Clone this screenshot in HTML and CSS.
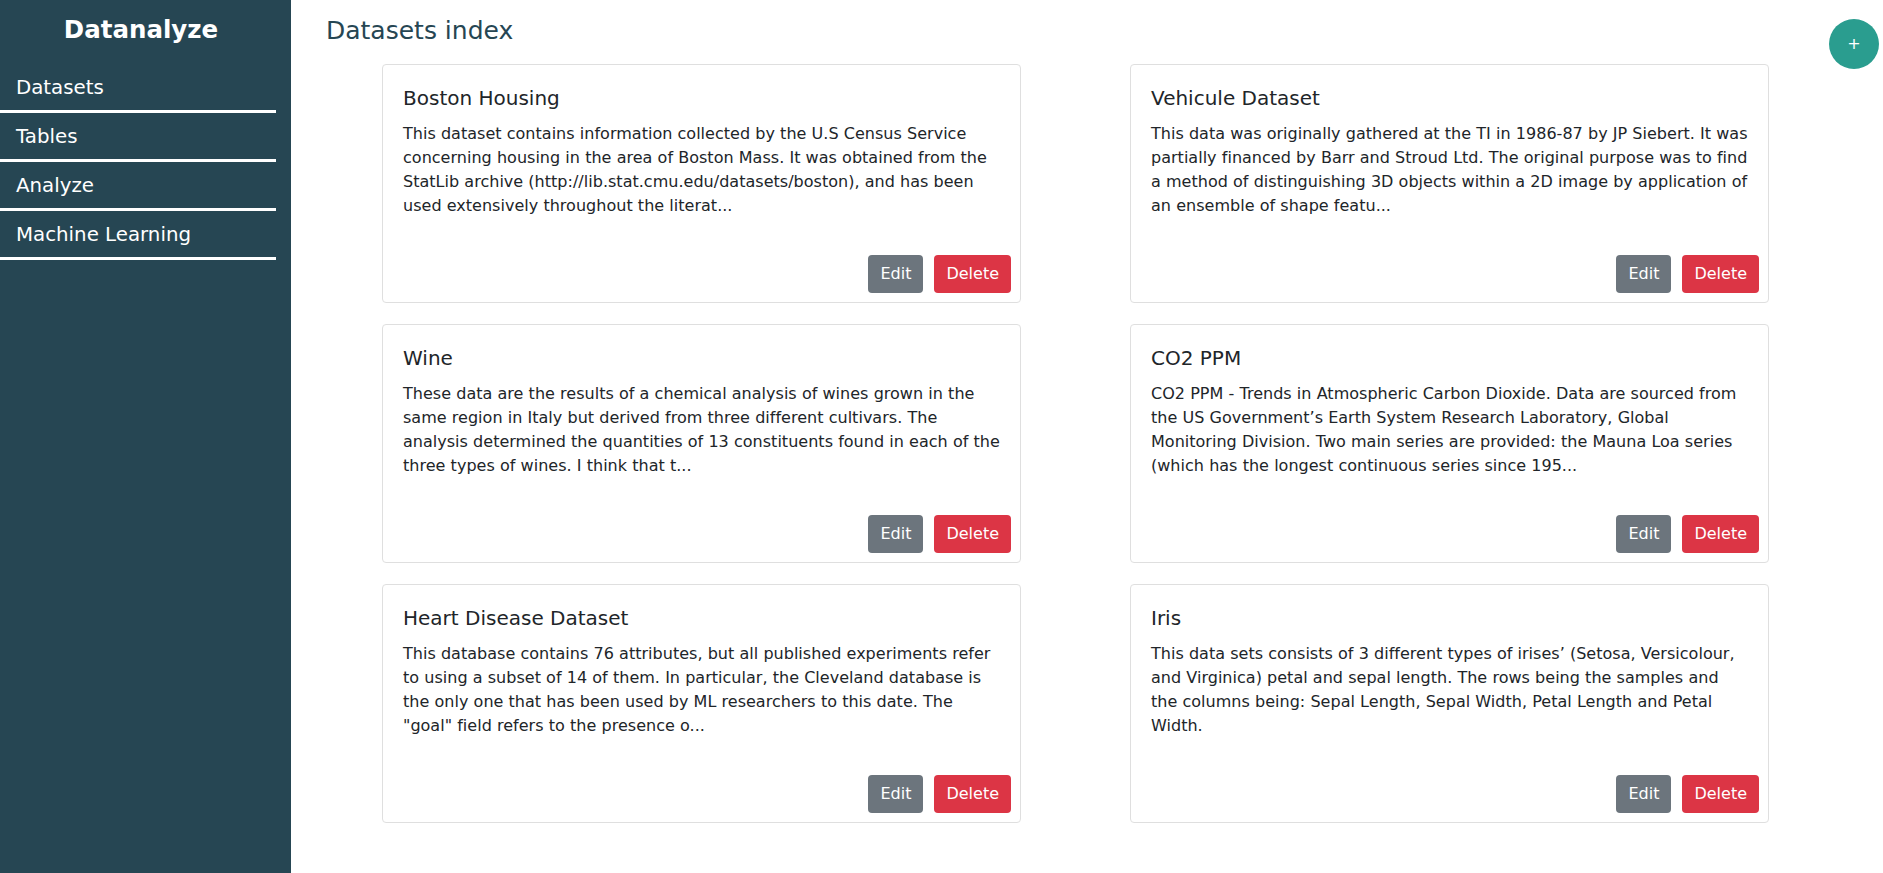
FILE: index.html
```html
<!DOCTYPE html>
<html lang="en">
<head>
<meta charset="utf-8">
<title>Datanalyze</title>
<link rel="stylesheet" href="styles.css">
</head>
<body>
<aside class="sidebar">
  <div class="brand">Datanalyze</div>
  <nav class="nav">
    <a class="nav-item" href="#">Datasets</a>
    <a class="nav-item" href="#">Tables</a>
    <a class="nav-item" href="#">Analyze</a>
    <a class="nav-item" href="#">Machine Learning</a>
  </nav>
</aside>
<main class="main">
  <h1 class="page-title">Datasets index</h1>
  <div class="grid">
    <div class="card">
      <div class="card-body">
        <h5 class="card-title">Boston Housing</h5>
        <p class="card-text">This dataset contains information collected by the U.S Census Service concerning housing in the area of Boston Mass. It was obtained from the StatLib archive (http://lib.stat.cmu.edu/datasets/boston), and has been used extensively throughout the literat...</p>
      </div>
      <div class="card-actions"><button class="btn btn-edit">Edit</button><button class="btn btn-delete">Delete</button></div>
    </div>
    <div class="card">
      <div class="card-body">
        <h5 class="card-title">Vehicule Dataset</h5>
        <p class="card-text">This data was originally gathered at the TI in 1986-87 by JP Siebert. It was partially financed by Barr and Stroud Ltd. The original purpose was to find a method of distinguishing 3D objects within a 2D image by application of an ensemble of shape featu...</p>
      </div>
      <div class="card-actions"><button class="btn btn-edit">Edit</button><button class="btn btn-delete">Delete</button></div>
    </div>
    <div class="card">
      <div class="card-body">
        <h5 class="card-title">Wine</h5>
        <p class="card-text">These data are the results of a chemical analysis of wines grown in the same region in Italy but derived from three different cultivars. The analysis determined the quantities of 13 constituents found in each of the three types of wines. I think that t...</p>
      </div>
      <div class="card-actions"><button class="btn btn-edit">Edit</button><button class="btn btn-delete">Delete</button></div>
    </div>
    <div class="card">
      <div class="card-body">
        <h5 class="card-title">CO2 PPM</h5>
        <p class="card-text">CO2 PPM - Trends in Atmospheric Carbon Dioxide. Data are sourced from the US Government’s Earth System Research Laboratory, Global Monitoring Division. Two main series are provided: the Mauna Loa series (which has the longest continuous series since 195...</p>
      </div>
      <div class="card-actions"><button class="btn btn-edit">Edit</button><button class="btn btn-delete">Delete</button></div>
    </div>
    <div class="card">
      <div class="card-body">
        <h5 class="card-title">Heart Disease Dataset</h5>
        <p class="card-text">This database contains 76 attributes, but all published experiments refer to using a subset of 14 of them. In particular, the Cleveland database is the only one that has been used by ML researchers to this date. The "goal" field refers to the presence o...</p>
      </div>
      <div class="card-actions"><button class="btn btn-edit">Edit</button><button class="btn btn-delete">Delete</button></div>
    </div>
    <div class="card">
      <div class="card-body">
        <h5 class="card-title">Iris</h5>
        <p class="card-text">This data sets consists of 3 different types of irises’ (Setosa, Versicolour, and Virginica) petal and sepal length. The rows being the samples and the columns being: Sepal Length, Sepal Width, Petal Length and Petal Width.</p>
      </div>
      <div class="card-actions"><button class="btn btn-edit">Edit</button><button class="btn btn-delete">Delete</button></div>
    </div>
  </div>
</main>
<button class="fab">+</button>
</body>
</html>
```
FILE: styles.css
```css
* { box-sizing: border-box; }
html, body { margin: 0; padding: 0; }
body {
  display: flex;
  min-height: 100vh;
  font-family: "DejaVu Sans", Verdana, sans-serif;
  font-size: 16px;
  line-height: 1.5;
  color: #212529;
  background: #fff;
}
.sidebar {
  width: 291px;
  flex: 0 0 291px;
  background: #264653;
  color: #fff;
}
.brand {
  font-size: 24.5px;
  font-weight: bold;
  line-height: 30px;
  text-align: center;
  padding: 15px 9px 0 0;
  height: 64px;
}
.nav {
  display: flex;
  flex-direction: column;
  margin-right: 15px;
}
.nav-item {
  display: block;
  color: #fff;
  text-decoration: none;
  font-size: 19.8px;
  line-height: 28px;
  padding: 10px 16px 8px 16px;
  border-bottom: 3px solid #fff;
}
.main {
  flex: 1;
  padding: 15px 35px;
}
.page-title {
  margin: 0 0 18px 0;
  font-size: 25px;
  font-weight: normal;
  line-height: 31px;
  color: #264653;
}
.grid {
  display: grid;
  grid-template-columns: 639px 639px;
  column-gap: 109px;
  row-gap: 21px;
  margin-left: 56px;
}
.card {
  height: 239px;
  border: 1px solid #dfdfdf;
  border-radius: 4px;
  display: flex;
  flex-direction: column;
  background: #fff;
}
.card-body {
  padding: 21px 20px 0 20px;
}
.card-title {
  margin: 0 0 12px 0;
  font-size: 20px;
  font-weight: normal;
  line-height: 24px;
}
.card-text {
  margin: 0;
  letter-spacing: 0.02px;
  word-spacing: 0.06px;
}
.card-actions {
  margin-top: auto;
  display: flex;
  justify-content: flex-end;
  gap: 11px;
  padding: 0 9px 9px 0;
}
.btn {
  font-family: inherit;
  font-size: 16px;
  line-height: 24px;
  padding: 7px 12px;
  border: 0;
  border-radius: 4px;
  color: #fff;
  cursor: pointer;
}
.btn-edit { background: #6c757d; }
.btn-delete { background: #dc3545; }
.fab {
  position: fixed;
  top: 19px;
  right: 4px;
  width: 50px;
  height: 50px;
  border-radius: 50%;
  border: 0;
  background: #2a9d8f;
  color: #fff;
  font-family: inherit;
  font-size: 16px;
  line-height: 1;
  padding: 0;
}
```
